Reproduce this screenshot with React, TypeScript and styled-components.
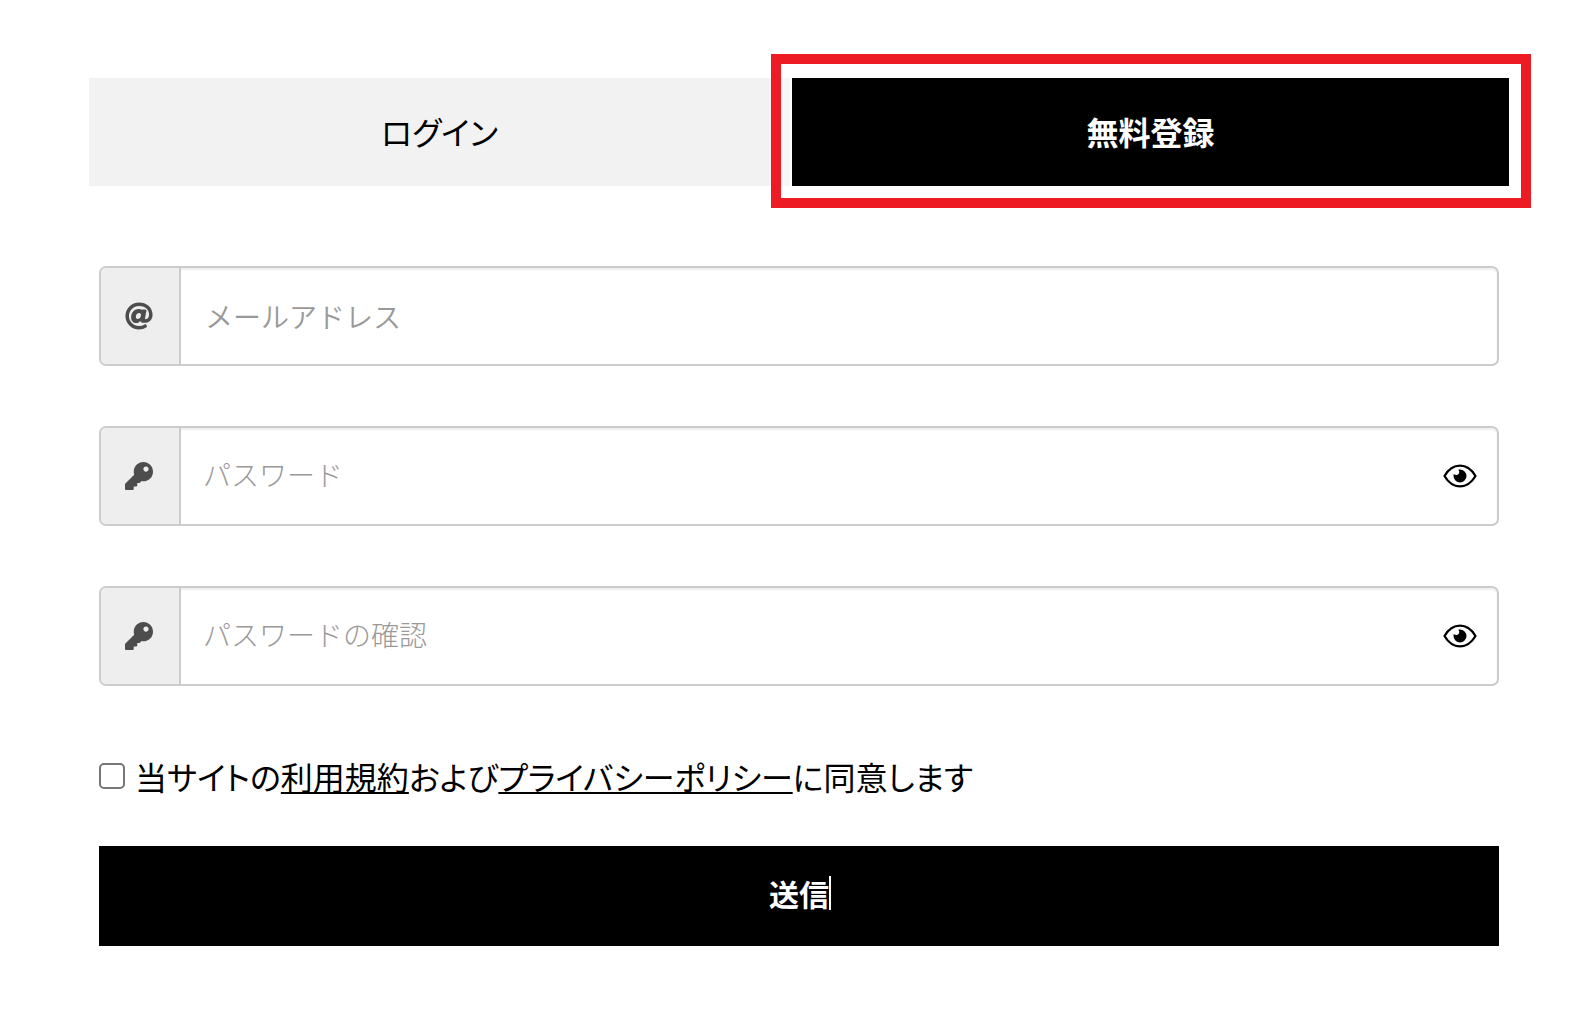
import React, { useState } from "react";
import styled, { createGlobalStyle } from "styled-components";
import { FaAt, FaKey } from "react-icons/fa";

const GlobalStyle = createGlobalStyle`
  *, *::before, *::after { box-sizing: border-box; }
  body {
    margin: 0;
    background: #fff;
    color: #000;
    font-family: "Noto Sans CJK JP", "Noto Sans", sans-serif;
  }
`;

const Page = styled.main`
  padding: 78px 85px 80px 89px;
`;

const Tabs = styled.div`
  display: grid;
  grid-template-columns: 701fr 717fr;
  gap: 2px;
`;

const Tab = styled.button<{ $active?: boolean }>`
  position: relative;
  height: 108px;
  padding: 0 0 2px;
  border: 0;
  background: ${(p) => (p.$active ? "#000" : "#f2f2f2")};
  color: ${(p) => (p.$active ? "#fff" : "#000")};
  font-family: inherit;
  font-size: 32px;
  line-height: 48px;
  font-weight: ${(p) => (p.$active ? 700 : 400)};
  font-feature-settings: "palt";
  cursor: pointer;
`;

const Highlight = styled.span`
  position: absolute;
  inset: -24px -22px -22px -21px;
  border: 10px solid #ed1c24;
  pointer-events: none;
`;

const Veil = styled.span`
  position: absolute;
  top: 0;
  bottom: 0;
  left: -11px;
  width: 9px;
  background: #f7f7f7;
`;

const Form = styled.form`
  display: flex;
  flex-direction: column;
  padding: 80px 10px 0;
`;

const Field = styled.div`
  display: flex;
  align-items: stretch;
  height: 100px;
  margin-bottom: 60px;
  border: 2px solid #ccc;
  border-radius: 7px;
  overflow: hidden;
  background: #fff;
  box-shadow: inset 0 2px 2px rgba(0, 0, 0, 0.07);
`;

const Addon = styled.label`
  display: flex;
  align-items: center;
  justify-content: center;
  flex: 0 0 80px;
  padding-right: 2px;
  border-right: 2px solid #ccc;
  background: #eee;
  color: #4d4d4d;
  font-size: 28px;
`;

const Input = styled.input<{ $light?: boolean }>`
  flex: 1;
  min-width: 0;
  padding: ${(p) => (p.$light ? "0 22px 4px" : "0 24px")};
  border: 0;
  outline: 0;
  background: transparent;
  color: #333;
  font-family: inherit;
  font-size: 28px;
  font-weight: ${(p) => (p.$light ? 300 : 350)};
  &::placeholder {
    color: #999;
    opacity: 1;
  }
`;

const EyeButton = styled.button`
  display: flex;
  align-items: center;
  padding: 0 20px;
  border: 0;
  background: transparent;
  color: #000;
  cursor: pointer;
`;

const Agreement = styled.div`
  display: flex;
  align-items: center;
  gap: 10px;
  height: 48px;
  margin: 6px 0 46px;
`;

const Check = styled.input`
  appearance: none;
  width: 26px;
  height: 26px;
  margin: 0;
  border: 2px solid #767676;
  border-radius: 5px;
  background: #fff;
  &:checked {
    background: #000;
  }
`;

const Terms = styled.label`
  font-size: 32px;
  line-height: 48px;
  font-weight: 400;
  font-feature-settings: "palt";
`;

const Link = styled.a`
  color: #000;
  text-decoration: underline;
  text-decoration-thickness: 2px;
  text-decoration-skip-ink: none;
  text-underline-offset: 2px;
`;

const Submit = styled.button`
  height: 100px;
  padding: 0 0 6px;
  border: 0;
  background: #000;
  color: #fff;
  font-family: inherit;
  font-size: 30px;
  font-weight: 700;
  cursor: pointer;
`;

const SubmitText = styled.span`
  position: relative;
`;

const Caret = styled.span`
  position: absolute;
  top: 5px;
  right: -2px;
  width: 2px;
  height: 34px;
  background: #fff;
`;

function Eye() {
  return (
    <svg width="34" height="24" viewBox="0 0 34 24" fill="none" aria-hidden="true">
      <path
        d="M1.5 12C5.5 5.2 10.8 1.7 17 1.7S28.500 5.200 32.500 12C28.500 18.800 23.200 22.300 17 22.300S5.500 18.800 1.500 12Z"
        stroke="currentColor"
        strokeWidth="2.3"
        strokeLinejoin="round"
      />
      <path
        d="M17 5.500A6.500 6.500 0 1 1 10.500 12C10.500 11.200 10.600 10.500 10.900 9.900C12 11.200 14.300 11.300 15.500 10C16.700 8.700 16.500 6.700 15.300 5.700C15.800 5.600 16.400 5.500 17 5.500Z"
        fill="currentColor"
      />
    </svg>
  );
}

function PasswordField({ id, placeholder }: { id: string; placeholder: string }) {
  const [visible, setVisible] = useState(false);
  return (
    <Field>
      <Addon htmlFor={id} aria-label={placeholder}>
        <FaKey />
      </Addon>
      <Input id={id} $light type={visible ? "text" : "password"} placeholder={placeholder} />
      <EyeButton type="button" aria-label="表示" onClick={() => setVisible(!visible)}>
        <Eye />
      </EyeButton>
    </Field>
  );
}

export default function App() {
  return (
    <>
      <GlobalStyle />
      <Page>
        <Tabs role="tablist">
          <Tab type="button" role="tab" aria-selected={false}>
            ログイン
          </Tab>
          <Tab type="button" role="tab" aria-selected $active>
            無料登録
            <Veil />
            <Highlight />
          </Tab>
        </Tabs>
        <Form onSubmit={(e) => e.preventDefault()}>
          <Field>
            <Addon htmlFor="email" aria-label="メールアドレス">
              <FaAt />
            </Addon>
            <Input id="email" type="email" placeholder="メールアドレス" />
          </Field>
          <PasswordField id="password" placeholder="パスワード" />
          <PasswordField id="confirm" placeholder="パスワードの確認" />
          <Agreement>
            <Check id="agree" type="checkbox" />
            <Terms htmlFor="agree">
              当サイトの<Link href="#terms">利用規約</Link>および
              <Link href="#privacy">プライバシーポリシー</Link>に同意します
            </Terms>
          </Agreement>
          <Submit type="submit">
            <SubmitText>
              送信
              <Caret />
            </SubmitText>
          </Submit>
        </Form>
      </Page>
    </>
  );
}
